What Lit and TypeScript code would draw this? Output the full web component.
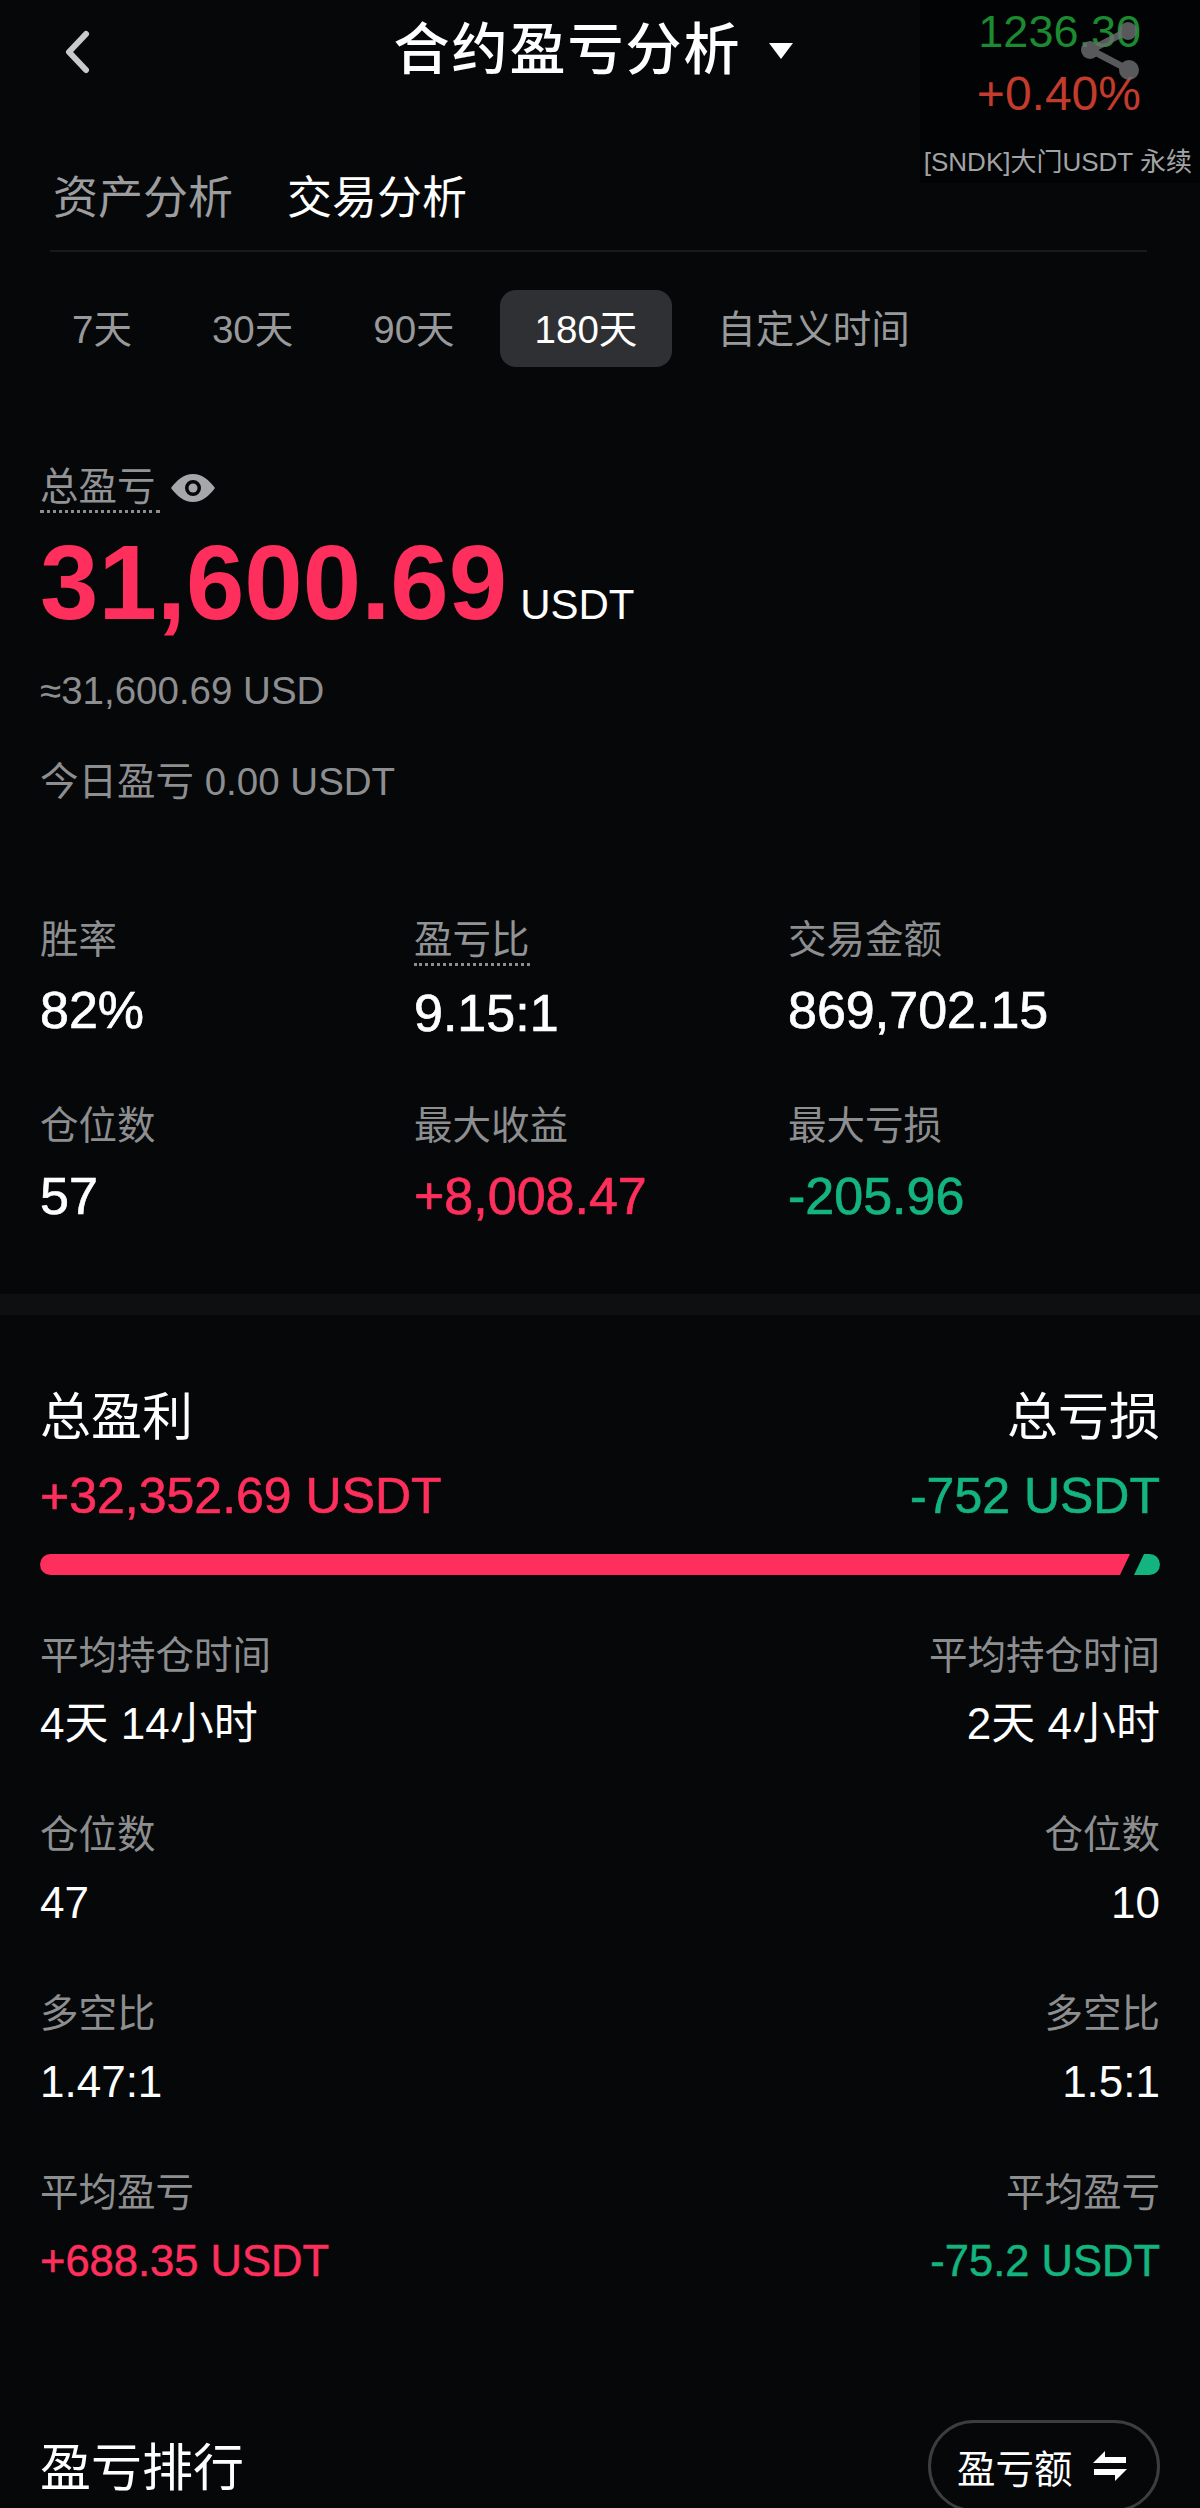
import { LitElement, html, css } from "lit";
import { customElement } from "lit/decorators.js";

const periods = ["7天", "30天", "90天", "180天", "自定义时间"];

const stats = [
  { label: "胜率", value: "82%" },
  { label: "盈亏比", value: "9.15:1", dotted: true },
  { label: "交易金额", value: "869,702.15" },
  { label: "仓位数", value: "57" },
  { label: "最大收益", value: "+8,008.47", tone: "up" },
  { label: "最大亏损", value: "-205.96", tone: "down" },
];

const compare = [
  { label: "平均持仓时间", left: "4天 14小时", right: "2天 4小时" },
  { label: "仓位数", left: "47", right: "10" },
  { label: "多空比", left: "1.47:1", right: "1.5:1" },
  { label: "平均盈亏", left: "+688.35 USDT", right: "-75.2 USDT", colored: true },
];

@customElement("app-root")
export class AppRoot extends LitElement {
  static styles = css`
    :host {
      display: block;
      height: 2508px;
      overflow: hidden;
      position: relative;
      background: #050709;
      color: #fff;
      font-family: "Liberation Sans", "Noto Sans CJK SC", sans-serif;
    }
    .header {
      height: 100px;
      display: flex;
      align-items: center;
      justify-content: center;
      position: relative;
    }
    .back {
      position: absolute;
      left: 60px;
      top: 30px;
    }
    .title {
      font-size: 56px;
      line-height: 100px;
      font-weight: 500;
      letter-spacing: 2px;
      margin-left: -13px;
    }
    .caret {
      margin-left: 26px;
      margin-top: 2px;
    }
    .ticker {
      position: absolute;
      right: 0;
      top: 0;
      width: 280px;
      height: 183px;
      background: #020304;
      text-align: right;
    }
    .price {
      position: absolute;
      right: 59px;
      top: 4px;
      font-size: 45px;
      line-height: 56px;
      color: #1c8a30;
    }
    .change {
      position: absolute;
      right: 59px;
      top: 66px;
      font-size: 48px;
      line-height: 56px;
      color: #c23b2c;
    }
    .pair {
      position: absolute;
      right: 8px;
      top: 146px;
      font-size: 26px;
      line-height: 32px;
      color: #a2a3a5;
      white-space: nowrap;
    }
    .share {
      position: absolute;
      right: 57px;
      top: 14px;
    }
    .tabs {
      margin: 0 53px 0 50px;
      padding: 72px 0 24px 3px;
      display: flex;
      gap: 54px;
      border-bottom: 2px solid #17191b;
      font-size: 45px;
      line-height: 54px;
      color: #9c9d9f;
    }
    .tabs .on {
      color: #fff;
    }
    .periods {
      margin-top: 38px;
      padding-left: 37px;
      display: flex;
      gap: 10px;
      font-size: 38.5px;
      line-height: 75px;
      color: #98999b;
    }
    .periods span {
      padding: 2px 35px 0;
      border-radius: 16px;
    }
    .periods .on {
      background: #2f3033;
      color: #fff;
    }
    .summary {
      padding: 96px 40px 0;
      height: 550px;
      box-sizing: border-box;
    }
    .sum-label {
      display: flex;
      align-items: center;
      gap: 11px;
      height: 50px;
    }
    .dotted {
      display: inline-block;
      border-bottom: 3px dotted #8d8e90;
      color: #929395;
    }
    .sum-label .dotted {
      font-size: 38.5px;
      line-height: 46px;
      padding-right: 4px;
    }
    .big {
      display: flex;
      align-items: baseline;
      gap: 13px;
      margin-top: 15px;
      line-height: 110px;
    }
    .big b {
      font-size: 105px;
      color: #fe2f5c;
    }
    .big span {
      font-size: 42px;
    }
    .approx,
    .today {
      font-size: 38.5px;
      line-height: 46px;
      color: #8d8e90;
    }
    .approx {
      margin-top: 8px;
    }
    .today {
      margin-top: 45px;
    }
    .stats {
      padding: 0 40px;
      display: grid;
      grid-template-columns: 374px 374px 1fr;
      row-gap: 60px;
    }
    .stat-label {
      font-size: 38.5px;
      line-height: 46px;
      color: #8d8e90;
    }
    .stat-value {
      font-size: 52px;
      line-height: 60px;
      margin-top: 17px;
      -webkit-text-stroke: 0.7px currentColor;
    }
    .up {
      color: #fe2f5c;
    }
    .down {
      color: #14b47e;
    }
    .band {
      height: 21px;
      background: #0d0f11;
      margin-top: 68px;
    }
    .totals {
      padding: 71px 40px 0;
    }
    .pair-row {
      display: flex;
      justify-content: space-between;
    }
    .totals-title {
      font-size: 51px;
      line-height: 64px;
    }
    .totals-value {
      font-size: 50px;
      line-height: 60px;
      margin-top: 16px;
      -webkit-text-stroke: 0.6px currentColor;
    }
    .bar {
      display: flex;
      height: 21px;
      margin-top: 28px;
      margin-bottom: 58px;
    }
    .compare-row {
      margin-bottom: 61px;
    }
    .compare-label {
      font-size: 38.5px;
      line-height: 46px;
      color: #8d8e90;
    }
    .compare-value {
      font-size: 44px;
      line-height: 54px;
      margin-top: 18px;
    }
    .compare-value.colored {
      font-size: 43.5px;
      -webkit-text-stroke: 0.5px currentColor;
    }
    .rank {
      margin-top: 132px;
      padding: 0 40px;
      display: flex;
      justify-content: space-between;
      align-items: flex-start;
    }
    .rank-title {
      font-size: 51px;
      line-height: 64px;
      margin-top: 17px;
    }
    .rank-btn {
      display: flex;
      align-items: center;
      gap: 20px;
      box-sizing: border-box;
      width: 232px;
      height: 92px;
      padding-left: 26px;
      border: 3px solid #3c3d3f;
      border-radius: 46px;
      font-size: 38.5px;
    }
  `;

  render() {
    return html`
      <div class="header">
        <svg class="back" width="36" height="44" viewBox="0 0 36 44">
          <path d="M26 4 L9 22 L26 40" fill="none" stroke="#c9cacb" stroke-width="6" stroke-linecap="round" stroke-linejoin="round" />
        </svg>
        <div class="title">合约盈亏分析</div>
        <svg class="caret" width="26" height="18" viewBox="0 0 26 18">
          <path d="M1 1 H25 L13 17 Z" fill="#fff" />
        </svg>
      </div>

      <div class="ticker">
        <div class="price">1236.30</div>
        <div class="change">+0.40%</div>
        <div class="pair">[SNDK]大门USDT 永续</div>
        <svg class="share" width="64" height="76" viewBox="0 0 64 76" opacity="0.8">
          <path d="M50 16 L12 36 L50 56" fill="none" stroke="#6e6f71" stroke-width="7" />
          <circle cx="49" cy="17" r="9" fill="#6e6f71" />
          <circle cx="11" cy="36" r="9" fill="#6e6f71" />
          <circle cx="50" cy="56" r="10" fill="#6e6f71" />
        </svg>
      </div>

      <div class="tabs">
        <span>资产分析</span>
        <span class="on">交易分析</span>
      </div>

      <div class="periods">
        ${periods.map((p) => html`<span class=${p === "180天" ? "on" : ""}>${p}</span>`)}
      </div>

      <div class="summary">
        <div class="sum-label">
          <span class="dotted">总盈亏</span>
          <svg width="44" height="30" viewBox="0 0 44 30">
            <path fill-rule="evenodd" d="M22 1 C31 1 38 7 44 15 C38 23 31 29 22 29 C13 29 6 23 0 15 C6 7 13 1 22 1 Z M22 7 A8 8 0 1 0 22 23 A8 8 0 1 0 22 7 Z" fill="#a5a7aa" />
            <circle cx="22" cy="15" r="4.5" fill="#a5a7aa" />
          </svg>
        </div>
        <div class="big"><b>31,600.69</b><span>USDT</span></div>
        <div class="approx">≈31,600.69 USD</div>
        <div class="today">今日盈亏 0.00 USDT</div>
      </div>

      <div class="stats">
        ${stats.map(
          (s) => html`
            <div>
              <div class="stat-label"><span class=${s.dotted ? "dotted" : ""}>${s.label}</span></div>
              <div class="stat-value ${s.tone ?? ""}">${s.value}</div>
            </div>
          `
        )}
      </div>

      <div class="band"></div>

      <div class="totals">
        <div class="pair-row totals-title"><span>总盈利</span><span>总亏损</span></div>
        <div class="pair-row totals-value">
          <span class="up">+32,352.69 USDT</span><span class="down">-752 USDT</span>
        </div>
        <svg class="bar" width="1120" height="21" viewBox="0 0 1120 21">
          <path d="M10.5 0 H1090 L1080 21 H10.5 A10.5 10.5 0 0 1 10.5 0 Z" fill="#fe2f5c" />
          <path d="M1104 0 H1109.5 A10.5 10.5 0 0 1 1109.5 21 H1094 Z" fill="#14b47e" />
        </svg>
        ${compare.map(
          (r) => html`
            <div class="compare-row">
              <div class="pair-row compare-label"><span>${r.label}</span><span>${r.label}</span></div>
              <div class="pair-row compare-value ${r.colored ? "colored" : ""}">
                <span class=${r.colored ? "up" : ""}>${r.left}</span>
                <span class=${r.colored ? "down" : ""}>${r.right}</span>
              </div>
            </div>
          `
        )}
      </div>

      <div class="rank">
        <div class="rank-title">盈亏排行</div>
        <div class="rank-btn">
          <span>盈亏额</span>
          <svg width="34" height="30" viewBox="0 0 34 30">
            <path d="M12 0 V6 H33 V12 H0 Z M22 30 V24 H1 V18 H34 Z" fill="#fff" />
          </svg>
        </div>
      </div>
    `;
  }
}
